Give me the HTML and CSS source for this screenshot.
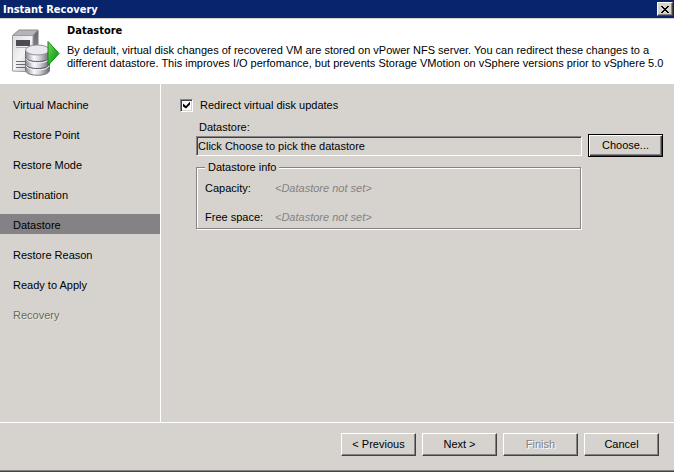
FILE: index.html
```
<!DOCTYPE html>
<html lang="en">
<head>
    <meta charset="UTF-8">
    <meta name="viewport" content="width=device-width, initial-scale=1.0">
    <title>Instant Recovery</title>
    <link rel="stylesheet" href="styles.css">
</head>
<body>
    <div class="window">
        <div class="titlebar">
            <h1>Instant Recovery</h1>
            <button type="button" class="close" aria-label="Close">
                <svg width="8" height="7" viewBox="0 0 8 7" shape-rendering="crispEdges">
                    <path d="M0 0h2v1h1v1h2v-1h1v-1h2v1h-1v1h-1v1h-1v1h1v1h1v1h1v1h-2v-1h-1v-1h-2v1h-1v1h-2v-1h1v-1h1v-1h1v-1h-1v-1h-1v-1h-1z" fill="#000"/>
                </svg>
            </button>
        </div>

        <header class="header">
            <svg class="logo" width="50" height="50" viewBox="0 0 50 50">
                <defs>
                    <linearGradient id="front" x1="0" y1="0" x2="1" y2="1">
                        <stop offset="0" stop-color="#dcdcde"/>
                        <stop offset=".5" stop-color="#f4f4f5"/>
                        <stop offset="1" stop-color="#b9b9bd"/>
                    </linearGradient>
                    <linearGradient id="side" x1="0" y1="0" x2="0" y2="1">
                        <stop offset="0" stop-color="#66666a"/>
                        <stop offset="1" stop-color="#a5a5aa"/>
                    </linearGradient>
                    <linearGradient id="disk" x1="0" y1="0" x2="1" y2="0">
                        <stop offset="0" stop-color="#85858f"/>
                        <stop offset=".35" stop-color="#fbfbfd"/>
                        <stop offset=".6" stop-color="#d0d0d8"/>
                        <stop offset="1" stop-color="#666670"/>
                    </linearGradient>
                    <linearGradient id="play" x1="0" y1="0" x2="1" y2="1">
                        <stop offset="0" stop-color="#7be05c"/>
                        <stop offset=".5" stop-color="#2db52a"/>
                        <stop offset="1" stop-color="#108a18"/>
                    </linearGradient>
                </defs>
                <!-- server -->
                <path d="M1.500 8.500L8 3h19l-5 5.500z" fill="#b4b4b8" stroke="#8a8a8f"/>
                <path d="M22 8.500L27.500 3v35l-5.500 6z" fill="url(#side)"/>
                <path d="M1.500 8.500H22V45L1.500 44z" fill="url(#front)" stroke="#9c9ca1"/>
                <path d="M5 13h14v6H5z" fill="#4c4c54"/>
                <path d="M5 20.500h14" stroke="#aeaeb3"/>
                <path d="M5 34.500h9M5 37.500h9M5 40.500h9" stroke="#6c6c72"/>
                <!-- disks -->
                <path d="M14.500 23v20c0 7 24 7 24 0V23z" fill="url(#disk)" stroke="#72727b"/>
                <path d="M14.500 30c0 6 24 6 24 0M14.500 37c0 6 24 6 24 0" fill="none" stroke="#55555f"/>
                <path d="M15 31.500c1 6 22 6 23 0M15 38.500c1 6 22 6 23 0" fill="none" stroke="#f4f4f8"/>
                <ellipse cx="26.500" cy="23" rx="12" ry="5" fill="#e9e9ef" stroke="#92929b"/>
                <!-- arrow -->
                <path d="M37 14.500L48 26.500L37 38.500z" fill="url(#play)" stroke="#16801c"/>
            </svg>
            <div class="header-text">
                <h2>Datastore</h2>
                <p>By default, virtual disk changes of recovered VM are stored on vPower NFS server. You can redirect these changes to a<br>different datastore. This improves I/O perfomance, but prevents Storage VMotion on vSphere versions prior to vSphere 5.0</p>
            </div>
        </header>

        <div class="content">
            <nav class="steps">
                <a href="#">Virtual Machine</a>
                <a href="#">Restore Point</a>
                <a href="#">Restore Mode</a>
                <a href="#">Destination</a>
                <a href="#" class="active">Datastore</a>
                <a href="#">Restore Reason</a>
                <a href="#">Ready to Apply</a>
                <a href="#" class="disabled">Recovery</a>
            </nav>

            <form class="main" id="datastoreForm">
                <div class="redirect">
                    <input type="checkbox" id="redirect" name="redirect" checked>
                    <label for="redirect">Redirect virtual disk updates</label>
                </div>

                <div class="options">
                    <label for="datastore">Datastore:</label>
                    <div class="picker">
                        <input type="text" id="datastore" name="datastore" value="Click Choose to pick the datastore" readonly>
                        <button type="button" class="btn default">Choose...</button>
                    </div>

                    <fieldset>
                        <legend>Datastore info</legend>
                        <dl>
                            <dt>Capacity:</dt>
                            <dd>&lt;Datastore not set&gt;</dd>
                            <dt>Free space:</dt>
                            <dd>&lt;Datastore not set&gt;</dd>
                        </dl>
                    </fieldset>
                </div>
            </form>
        </div>

        <footer class="footer">
            <button type="button" class="btn">&lt; Previous</button>
            <button type="button" class="btn">Next &gt;</button>
            <button type="button" class="btn" disabled>Finish</button>
            <button type="button" class="btn">Cancel</button>
        </footer>
    </div>
</body>
</html>
```
FILE: styles.css
```
* {
    box-sizing: border-box;
}

body {
    margin: 0;
    font-family: "Liberation Sans", Arial, sans-serif;
    font-size: 11px;
    line-height: 13px;
    color: #000;
    background-color: #d6d3ce;
}

h1, h2, p, dl, dd {
    margin: 0;
}

h1, h2 {
    font-family: "DejaVu Sans Condensed", Tahoma, sans-serif;
    font-size: 11px;
    font-weight: bold;
}

input, button {
    font: inherit;
    color: inherit;
}

.window {
    display: flex;
    flex-direction: column;
    min-height: 100vh;
    border-bottom: 1px solid #424142;
}

/* title bar */
.titlebar {
    display: flex;
    align-items: center;
    justify-content: space-between;
    height: 19px;
    padding: 0 1px 0 3px;
    color: #fff;
    background-color: #08246b;
    border-bottom: 1px solid #d6d3ce;
}

.close {
    display: flex;
    align-items: center;
    justify-content: center;
    width: 16px;
    height: 14px;
    padding: 0;
    background-color: #d6d3ce;
    border: 1px solid;
    border-color: #fff #424142 #424142 #fff;
    box-shadow: inset -1px -1px #848284;
}

/* header */
.header {
    display: flex;
    gap: 6px;
    height: 65px;
    padding: 5px 11px;
    background-color: #fff;
}

.logo {
    flex: none;
    margin-top: 3px;
}

.header-text h2 {
    margin-bottom: 7px;
}

.header-text p {
    white-space: nowrap;
}

/* body */
.content {
    display: flex;
    flex: 1;
    border-bottom: 1px solid #fff;
}

.steps {
    display: flex;
    flex-direction: column;
    gap: 10px;
    width: 161px;
    padding-top: 10px;
    border-right: 1px solid #fff;
}

.steps a {
    padding-left: 13px;
    line-height: 22px;
    height: 20px;
    color: #000;
    text-decoration: none;
}

.steps .active {
    background-color: #848284;
}

.steps .disabled {
    color: #6b695a;
    text-shadow: 1px 1px #e7e7de;
}

.main {
    flex: 1;
    padding: 13px 11px 13px 19px;
}

.redirect {
    display: flex;
    align-items: center;
    gap: 7px;
    height: 16px;
}

.redirect input {
    appearance: none;
    width: 13px;
    height: 13px;
    margin: 0;
    background-color: #fff;
    border: 1px solid;
    border-color: #848284 #fff #fff #848284;
    box-shadow: inset 1px 1px #424142, inset -1px -1px #d6d3ce;
}

.redirect input:checked::before {
    content: "";
    display: block;
    width: 7px;
    height: 7px;
    margin: 2px;
    background-color: #000;
    clip-path: polygon(0 28%, 43% 64%, 100% 0, 100% 43%, 43% 100%, 0 71%);
}

.options {
    padding-left: 16px;
}

.options > label {
    display: block;
    margin: 8px 0 0 3px;
}

.picker {
    display: flex;
    align-items: center;
    gap: 6px;
}

.picker input {
    flex: 1;
    min-width: 0;
    height: 20px;
    padding: 0 1px;
    background-color: #d6d3ce;
    border: 1px solid;
    border-color: #848284 #fff #fff #848284;
    box-shadow: inset 1px 1px #424142;
    outline: none;
}

fieldset {
    min-width: 0;
    margin: 4px 82px 0 0;
    padding: 8px 8px 4px;
    border: 1px solid #848284;
    box-shadow: 1px 1px #fff, inset 1px 1px #fff;
}

legend {
    padding: 0 3px;
    background-color: #d6d3ce;
}

dl {
    display: grid;
    grid-template-columns: 70px 1fr;
    row-gap: 16px;
}

dd {
    font-style: italic;
    color: #848284;
}

/* buttons */
.btn {
    flex: none;
    width: 75px;
    height: 23px;
    padding: 0;
    background-color: #d6d3ce;
    border: 1px solid;
    border-color: #fff #424142 #424142 #fff;
    box-shadow: inset -1px -1px #848284;
}

.btn.default {
    border-color: #000;
    box-shadow: inset 1px 1px #fff, inset -1px -1px #424142, inset -2px -2px #848284;
}

.btn:disabled {
    color: #848284;
    text-shadow: 1px 1px #fff;
}

.footer {
    display: flex;
    justify-content: flex-end;
    gap: 6px;
    padding: 10px 15px 14px;
    border-bottom: 1px solid #848284;
}
```
